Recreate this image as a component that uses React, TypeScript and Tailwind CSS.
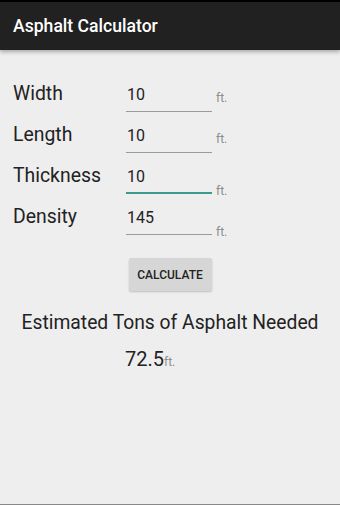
import React from 'react';

type Field = { label: string; value: string; focused?: boolean; unitLow?: boolean };

const fields: Field[] = [
  { label: 'Width', value: '10' },
  { label: 'Length', value: '10' },
  { label: 'Thickness', value: '10', focused: true, unitLow: true },
  { label: 'Density', value: '145', unitLow: true },
];

function FieldRow({ field }: { field: Field }) {
  return (
    <div className="flex h-[41px] items-end">
      {/* label */}
      <div className="w-[113px] self-start pt-[11px] text-[19.4px] leading-[23px] text-[#222]">
        {field.label}
      </div>
      {/* input */}
      <div
        className={
          field.focused
            ? 'w-[86px] border-b-2 border-[#3a9b8d] pb-[5px] pl-[1px] text-[16px] leading-[20px] text-[#222]'
            : 'w-[86px] border-b border-[#9a9a9a] pb-[6px] pl-[1px] text-[16px] leading-[20px] text-[#222]'
        }
      >
        {field.value}
      </div>
      <span
        className={
          field.unitLow
            ? 'ml-[4px] mb-[-4px] text-[12px] leading-[14px] text-[#8c8c8c]'
            : 'ml-[4px] mb-[7px] text-[12px] leading-[14px] text-[#8c8c8c]'
        }
      >
        ft.
      </span>
    </div>
  );
}

export default function App() {
  return (
    <div
      className="flex h-[505px] w-[340px] flex-col border-b border-[#888] bg-[#eeeeee]"
      style={{ fontFamily: 'Roboto, "Noto Sans", sans-serif' }}
    >
      {/* status strip + toolbar */}
      <div className="h-[2px] bg-black" />
      <div className="relative z-10 flex h-[48px] items-center bg-[#212121] pl-[13px] shadow-[0_2px_4px_rgba(0,0,0,0.3)]">
        <span className="text-[17.6px] font-medium text-white">Asphalt Calculator</span>
      </div>

      {/* form */}
      <div className="flex flex-col pl-[13px] pt-[21px]">
        {fields.map((f) => (
          <FieldRow key={f.label} field={f} />
        ))}
      </div>

      <div className="mt-[23px] flex justify-center">
        <button className="h-[33px] w-[83px] rounded-[2px] bg-[#d6d6d6] text-[12px] font-medium text-[#222] shadow-[0_1px_2px_rgba(0,0,0,0.2)]">
          CALCULATE
        </button>
      </div>

      <div className="mt-[20px] text-center text-[19.3px] leading-[24px] text-[#222]">
        Estimated Tons of Asphalt Needed
      </div>

      <div className="mt-[12px] flex items-baseline pl-[125px] text-[#222]">
        <span className="text-[20px] leading-[24px]">72.5</span>
        <span className="text-[12px] text-[#8c8c8c]">ft.</span>
      </div>
    </div>
  );
}
